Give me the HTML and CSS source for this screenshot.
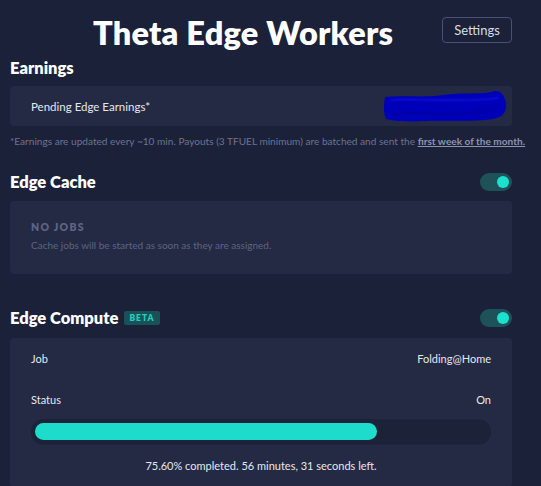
FILE: index.html
```html
<!DOCTYPE html>
<html>
<head>
<meta charset="utf-8">
<link rel="stylesheet" href="styles.css">
</head>
<body>
<div class="page">
  <header class="header">
    <h1 class="title">Theta Edge Workers</h1>
    <button class="btn">Settings</button>
  </header>

  <section class="section earnings">
    <div class="sec-head"><h2 class="sec-title">Earnings</h2></div>
    <div class="card card-row">
      <span class="label">Pending Edge Earnings*</span>
      <svg class="redact" width="124" height="32" viewBox="0 0 124 32">
        <path d="M2 7 C20 5 40 8 60 5 C80 2 100 5 112 1 C118 0 122 6 123 13 C124 21 121 27 110 29 C90 32 60 30 40 31 C25 32 10 31 3 29 C0 23 1 13 2 7 Z" fill="#0000b8"/>
        <path d="M8 10 C40 8 80 13 116 8" stroke="#0808cc" stroke-width="3" fill="none"/>
        <path d="M10 24 C40 22 80 25 112 21" stroke="#0000a8" stroke-width="3" fill="none"/>
      </svg>
    </div>
    <p class="note">*Earnings are updated every ~10 min. Payouts (3 TFUEL minimum) are batched and sent the <a class="link">first week of the month.</a></p>
  </section>

  <section class="section cache">
    <div class="sec-head">
      <h2 class="sec-title">Edge Cache</h2>
      <span class="toggle"><span class="knob"></span></span>
    </div>
    <div class="card card-empty">
      <div class="empty-title">NO JOBS</div>
      <div class="empty-sub">Cache jobs will be started as soon as they are assigned.</div>
    </div>
  </section>

  <section class="section compute">
    <div class="sec-head">
      <h2 class="sec-title">Edge Compute <span class="badge">BETA</span></h2>
      <span class="toggle"><span class="knob"></span></span>
    </div>
    <div class="card card-compute">
      <div class="kv"><span>Job</span><span>Folding@Home</span></div>
      <div class="kv"><span>Status</span><span>On</span></div>
      <div class="track"><div class="fill" style="width: 75.6%"></div></div>
      <div class="progress-text">75.60% completed. 56 minutes, 31 seconds left.</div>
    </div>
  </section>
</div>
</body>
</html>
```

FILE: styles.css
```css
* { box-sizing: border-box; }
html, body { margin: 0; padding: 0; }
body {
  background: #1b2139;
  font-family: "Lato", "Noto Sans", sans-serif;
  color: #e6e8f0;
  height: 486px;
  overflow: hidden;
}
.page {
  width: 502px;
  margin-left: 10px;
}
.header {
  display: flex;
  align-items: center;
  justify-content: space-between;
  height: 58px;
  padding-top: 6px;
}
.title {
  margin: 0 0 0 83px;
  font-size: 32.5px;
  font-weight: 800;
  color: #ffffff;
  letter-spacing: 0.2px;
}
.btn {
  width: 70px;
  height: 26px;
  background: transparent;
  border: 1px solid #4a5270;
  border-radius: 4px;
  color: #d8dbe6;
  font-family: inherit;
  font-size: 13px;
  padding: 0;
  margin-top: -4px;
}
.sec-head {
  display: flex;
  align-items: center;
  justify-content: space-between;
  height: 20px;
}
.sec-title {
  margin: 0;
  font-size: 16.5px;
  font-weight: 800;
  color: #ffffff;
  display: flex;
  align-items: center;
}
.card {
  background: #242a43;
  border-radius: 4px;
}
.earnings .card { margin-top: 8px; }
.card-row {
  height: 40px;
  display: flex;
  align-items: center;
  justify-content: space-between;
  padding: 0 5px 0 21px;
}
.label { font-size: 11.5px; color: #e6e8f0; }
.redact { display: block; }
.note {
  margin: 9px 0 0;
  font-size: 10.1px;
  color: #6c7391;
  white-space: nowrap;
}
.link {
  color: #8d93ad;
  font-weight: 700;
  text-decoration: underline;
}
.cache { margin-top: 25px; }
.cache .card { margin-top: 9px; }
.toggle {
  width: 32px;
  height: 18px;
  border-radius: 9px;
  background: #1d5259;
  display: flex;
  align-items: center;
  justify-content: flex-end;
  padding-right: 3px;
}
.knob {
  width: 12px;
  height: 12px;
  border-radius: 50%;
  background: #1de0cf;
}
.card-empty {
  height: 73px;
  padding: 20px 21px 0;
}
.empty-title {
  font-size: 10.5px;
  font-weight: 800;
  letter-spacing: 1.3px;
  color: #5d6483;
  line-height: 13px;
}
.empty-sub {
  margin-top: 5px;
  font-size: 10px;
  color: #5d6483;
  line-height: 13px;
}
.compute { margin-top: 34px; }
.compute .card { margin-top: 10px; }
.badge {
  margin-left: 6px;
  background: #1a5158;
  color: #22cfc0;
  font-size: 8.5px;
  font-weight: 800;
  letter-spacing: 1px;
  padding: 2px 5px;
  border-radius: 2px;
}
.card-compute {
  padding: 10px 21px 14px;
}
.kv {
  display: flex;
  justify-content: space-between;
  font-size: 11px;
  color: #e6e8f0;
  height: 20px;
  align-items: center;
}
.kv + .kv { margin-top: 21px; }
.track {
  margin-top: 10px;
  height: 26px;
  border-radius: 13px;
  background: #1c2238;
  padding: 4px;
}
.fill {
  height: 17px;
  border-radius: 9px;
  background: #1ddccc;
}
.progress-text {
  text-align: center;
  font-size: 11px;
  line-height: 14px;
  margin-top: 14px;
  color: #e6e8f0;
}
```
